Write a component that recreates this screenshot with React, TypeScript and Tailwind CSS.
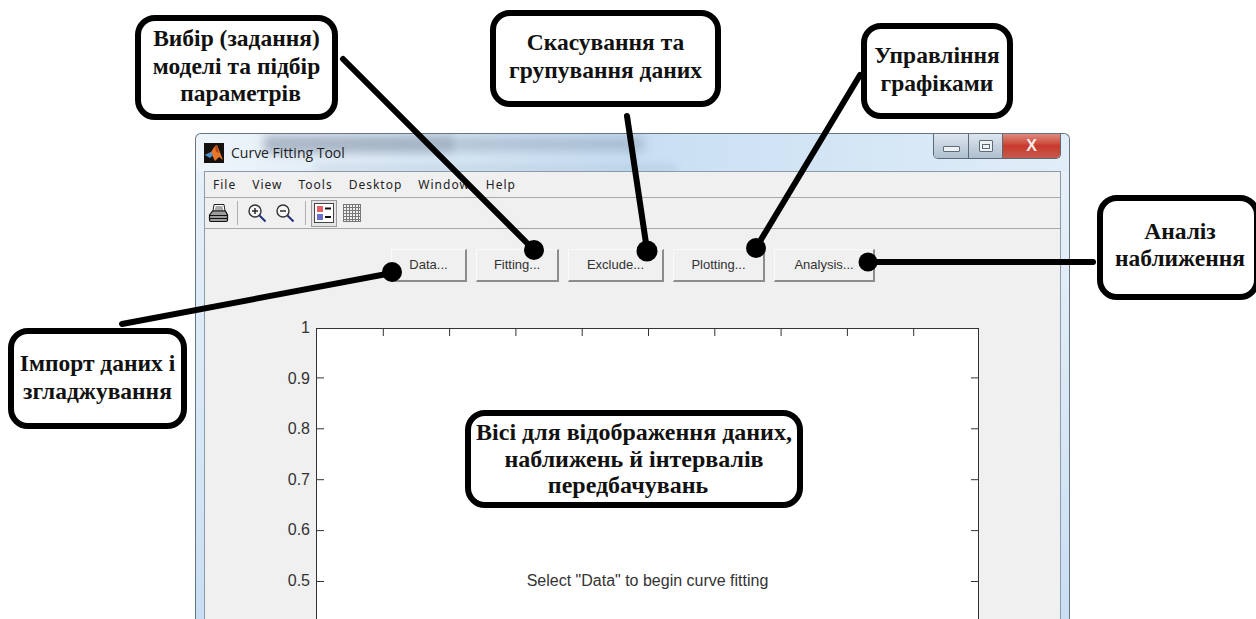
import type { ReactNode } from 'react'

const menuItems = ['File', 'View', 'Tools', 'Desktop', 'Window', 'Help']
const panelButtons = [
  { label: 'Data...', width: 'w-[76px]' },
  { label: 'Fitting...', width: 'w-[83px]' },
  { label: 'Exclude...', width: 'w-[96px]' },
  { label: 'Plotting...', width: 'w-[92px]' },
  { label: 'Analysis...', width: 'w-[101px]' },
]
const yLabels = ['1', '0.9', '0.8', '0.7', '0.6', '0.5']

function MatlabLogo() {
  return (
    <svg width="20" height="20" viewBox="0 0 20 20" className="shrink-0">
      <rect width="20" height="20" fill="#14110f" />
      <path d="M1 12 L7 9 L11 3 L13 2 L19 17 L15 14 L11 18 L8 12 Z" fill="#e8772a" />
      <path d="M1 12 L7 9 L9 12 L6 15 Z" fill="#4d8fc9" />
      <path d="M11 3 L13 2 L15 10 L12 9 Z" fill="#b9461c" />
    </svg>
  )
}

function PrinterIcon() {
  return (
    <svg width="21" height="20" viewBox="0 0 21 20" className="shrink-0">
      <path d="M6 1.5 H16 L17 8 H5 Z" fill="#fff" stroke="#222" />
      <path d="M7.5 4 H14.5 M7 6 H15" stroke="#555" />
      <path d="M1.5 12 L4.5 8 H17.5 L19.5 12 V17 Q19.5 18.5 18 18.5 H3 Q1.5 18.5 1.5 17 Z" fill="#9c9c9c" stroke="#111" strokeWidth="1.2" />
      <path d="M2 12.5 H19 M2 15.5 H19" stroke="#111" />
    </svg>
  )
}

function MagnifierIcon({ plus }: { plus?: boolean }) {
  return (
    <svg width="20" height="20" viewBox="0 0 20 20" className="shrink-0">
      <circle cx="8" cy="8" r="6" fill="#f6f6f6" stroke="#333" strokeWidth="1.4" />
      <path d="M5 8 H11" stroke="#222" strokeWidth="1.4" />
      {plus && <path d="M8 5 V11" stroke="#222" strokeWidth="1.4" />}
      <path d="M12.5 12.5 L18.5 18.5" stroke="#23307a" strokeWidth="2" />
    </svg>
  )
}

function LegendIcon() {
  return (
    <svg width="20" height="20" viewBox="0 0 20 20">
      <rect x="0.5" y="0.5" width="19" height="19" fill="#fff" stroke="#444" />
      <rect x="3" y="3" width="6" height="6" fill="#e2626a" />
      <rect x="3" y="11" width="6" height="6" fill="#6b6fd0" />
      <path d="M11 5.5 H17 M11 14 H17" stroke="#111" strokeWidth="2" />
    </svg>
  )
}

function GridIcon() {
  const lines = [0.5, 3.5, 6.5, 9.5, 12.5, 15.5, 17.5]
  return (
    <svg width="18" height="18" viewBox="0 0 18 18" className="shrink-0" stroke="#777">
      {lines.map((p) => (
        <path key={p} d={`M${p} 0 V18 M0 ${p} H18`} />
      ))}
    </svg>
  )
}

function Callout({ className, children }: { className: string; children: ReactNode }) {
  return (
    <div
      className={`absolute flex flex-col items-center whitespace-nowrap bg-white border-[6px] border-black rounded-[20px] font-['Liberation_Serif',serif] font-bold text-[#111] ${className}`}
    >
      {children}
    </div>
  )
}

// Leader lines from each note to the control it points at
function Leaders() {
  return (
    <svg width="1256" height="619" className="absolute left-0 top-0 pointer-events-none">
      <g stroke="#000" strokeLinecap="round" fill="none">
        <path d="M343 59 L534 250" strokeWidth="6" />
        <path d="M627 116 L647 250" strokeWidth="6" />
        <path d="M860 75 L756 248" strokeWidth="6" />
        <path d="M868 262 L1093 262" strokeWidth="6" />
        <path d="M122 324 L392 273" strokeWidth="6" />
      </g>
      <circle cx="392" cy="272" r="10" />
      <circle cx="534" cy="250" r="10" />
      <circle cx="647" cy="251" r="10.5" />
      <circle cx="756" cy="248" r="10" />
      <circle cx="868" cy="262" r="9.5" />
    </svg>
  )
}

function AxesTicks() {
  const xs = [1, 2, 3, 4, 5, 6, 7, 8, 9].map((i) => i * 66.3)
  const ys = [1, 2, 3, 4, 5].map((i) => i * 50.9 - 2)
  return (
    <svg width="661" height="290" className="absolute left-0 top-0" stroke="#333">
      {xs.map((x) => (
        <path key={x} d={`M${x} 0 V7`} />
      ))}
      {ys.map((y) => (
        <path key={y} d={`M0 ${y} H7 M654 ${y} H661`} />
      ))}
    </svg>
  )
}

export default function App() {
  return (
    <div className="relative w-[1256px] h-[619px] overflow-hidden bg-white font-['Liberation_Sans',sans-serif]">
      {/* Figure window */}
      <div className="ml-[195px] mt-[133px] w-[875px] h-[486px] flex flex-col px-[8px] rounded-t-[6px] border border-b-0 border-[#66757f] bg-gradient-to-b from-[#e9f1f9] via-[#dbe9f7] to-[#c9def3]">
        <div className="relative h-[37px] shrink-0 -mx-[8px] px-[8px] flex items-start justify-between rounded-t-[6px] overflow-hidden bg-gradient-to-r from-[#eef4fa] via-[#c8dff3] to-[#e1edf8]">
          <div className="absolute left-[68px] top-[1px] w-[190px] h-[18px] bg-[#53657d] opacity-40 blur-[5px]" />
          <div className="absolute left-[258px] top-[3px] w-[190px] h-[14px] bg-[#53657d] opacity-30 blur-[6px]" />
          <div className="absolute left-[120px] top-[32px] w-[360px] h-[5px] bg-[#7d93a9] opacity-30 blur-[4px]" />
          <div className="relative flex items-center gap-[7px] pt-[9px]">
            <MatlabLogo />
            <span className="font-['Open_Sans',sans-serif] text-[14px] leading-[20px] text-[#222]">Curve Fitting Tool</span>
          </div>
          <div className="relative flex h-[25px] w-[128px] overflow-hidden rounded-b-[5px] border border-t-0 border-[#5d6a76]">
            <div className="w-[35px] flex items-center justify-center border-r border-[#5d6a76] bg-gradient-to-b from-[#dce6ef] to-[#aebfce]">
              <div className="w-[17px] h-[6px] mt-[6px] bg-[#eef2f5] border border-[#5c6b78] rounded-[1px]" />
            </div>
            <div className="w-[34px] flex items-center justify-center border-r border-[#5d6a76] bg-gradient-to-b from-[#dce6ef] to-[#aebfce]">
              <div className="w-[14px] h-[12px] flex items-center justify-center bg-[#eef2f5] border border-[#5c6b78] rounded-[1px]">
                <div className="w-[8px] h-[5px] border border-[#5c6b78]" />
              </div>
            </div>
            <div className="flex-1 flex items-center justify-center bg-gradient-to-b from-[#dc8a7e] via-[#c8392c] to-[#c55a4c]">
              <span className="font-['Liberation_Sans',sans-serif] font-bold text-[16px] leading-none text-[#f2ecea]">X</span>
            </div>
          </div>
        </div>

        <div className="flex-1 min-h-0 flex flex-col border border-b-0 border-[#8b9aa8] bg-[#f0f0f0]">
          <div className="h-[26px] shrink-0 flex items-center pl-[8px] gap-[16px] border-b border-[#a8a8a8] font-['Noto_Sans',sans-serif] text-[12px] tracking-[1px] text-[#222]">
            {menuItems.map((item) => (
              <span key={item}>{item}</span>
            ))}
          </div>
          <div className="h-[31px] shrink-0 flex items-center pl-[3px] border-b border-[#a8a8a8]">
            <PrinterIcon />
            <div className="ml-[8px] w-px h-[24px] bg-[#b0b0b0]" />
            <div className="ml-[9px] flex gap-[8px]">
              <MagnifierIcon plus />
              <MagnifierIcon />
            </div>
            <div className="ml-[10px] w-px h-[24px] bg-[#b0b0b0]" />
            <div className="ml-[5px] w-[26px] h-[27px] flex items-center justify-center border border-[#9a9a9a] bg-[#e4e4e4]">
              <LegendIcon />
            </div>
            <div className="ml-[6px]">
              <GridIcon />
            </div>
          </div>

          <div className="mt-[20px] ml-[186px] flex gap-[9px] shrink-0">
            {panelButtons.map((b) => (
              <div
                key={b.label}
                className={`${b.width} h-[33px] flex items-center justify-center border-t border-l border-t-[#fafafa] border-l-[#fafafa] border-r-2 border-b-2 border-r-[#8c8c8c] border-b-[#8c8c8c] text-[13px] text-[#333]`}
              >
                {b.label}
              </div>
            ))}
          </div>

          <div className="mt-[46px] flex flex-1 min-h-0">
            <div className="w-[105px] shrink-0 flex flex-col -mt-[9px] text-[16px] leading-[18px] text-[#333]">
              {yLabels.map((label) => (
                <div key={label} className="h-[50.6px] shrink-0 text-right">
                  {label}
                </div>
              ))}
            </div>
            <div className="relative ml-[6px] w-[663px] border border-b-0 border-[#333] bg-white">
              <AxesTicks />
              <div className="mt-[242px] text-center text-[16px] leading-[20px] text-[#333]">Select "Data" to begin curve fitting</div>
            </div>
          </div>
        </div>
      </div>

      <Leaders />

      <Callout className="left-[135px] top-[15px] w-[203px] h-[105px] pt-[4px] text-[23.5px] leading-[27.5px]">
        <span>Вибір (задання)</span>
        <span>моделі та підбір</span>
        <span className="ml-[8px]">параметрів</span>
      </Callout>
      <Callout className="left-[490px] top-[10px] w-[231px] h-[97px] pt-[12px] text-[23.5px] leading-[28px]">
        <span>Скасування та</span>
        <span>групування даних</span>
      </Callout>
      <Callout className="left-[861px] top-[23px] w-[152px] h-[96px] pt-[12px] text-[23.5px] leading-[28px]">
        <span>Управління</span>
        <span>графіками</span>
      </Callout>
      <Callout className="left-[1097px] top-[195px] w-[163px] h-[105px] pt-[17px] pl-[3px] text-[23.5px] leading-[27px]">
        <span>Аналіз</span>
        <span>наближення</span>
      </Callout>
      <Callout className="left-[8px] top-[328px] w-[179px] h-[101px] pt-[15px] text-[23.5px] leading-[28px]">
        <span>Імпорт даних і</span>
        <span>згладжування</span>
      </Callout>
      <Callout className="left-[465px] top-[410px] w-[338px] h-[98px] pt-[3px] text-[24px] leading-[26.5px]">
        <span>Вісі для відображення даних,</span>
        <span>наближень й інтервалів</span>
        <span className="mr-[12px]">передбачувань</span>
      </Callout>
    </div>
  )
}
